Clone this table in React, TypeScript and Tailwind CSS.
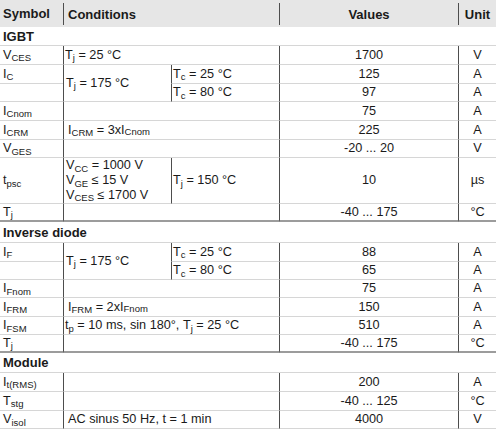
import React from "react";

const LINE = "border-[#4d4d4d]";
const HB = "border-b border-b-[#d6d6d6]";
const SEC = "border-b-2 border-b-[#9c9c9c]";

function S({ b, s }: { b: string; s: string }) {
  return (
    <span>
      {b}
      <sub>{s}</sub>
    </span>
  );
}

type RowProps = {
  h: string;
  sym?: React.ReactNode;
  cond?: React.ReactNode;
  condPad?: string;
  val?: React.ReactNode;
  unit?: React.ReactNode;
  last?: boolean;
};

function Row({ h, sym, cond, condPad = "pl-[1px]", val, unit, last }: RowProps) {
  const b = last ? SEC : HB;
  return (
    <div className={`flex ${h}`}>
      <div className={`w-[63px] shrink-0 flex items-center pl-[3px] ${b}`}>{sym}</div>
      <div className={`w-[216px] shrink-0 flex items-center border-l ${LINE} ${condPad} ${b}`}>{cond}</div>
      <div className={`w-[179px] shrink-0 flex items-center justify-center border-l ${LINE} ${b}`}>{val}</div>
      <div className={`w-[38px] shrink-0 flex items-center justify-center border-l ${LINE} ${b}`}>{unit}</div>
    </div>
  );
}

function Section({ h, title }: { h: string; title: string }) {
  return (
    <div className={`flex items-center pl-[3px] font-bold text-[13px] ${h} ${HB}`}>{title}</div>
  );
}

function SplitRow({
  sym,
  cond,
  a,
  b,
}: {
  sym: React.ReactNode;
  cond: React.ReactNode;
  a: { tc: React.ReactNode; val: string; unit: string };
  b: { tc: React.ReactNode; val: string; unit: string };
}) {
  return (
    <div className="flex">
      <div className="w-[63px] shrink-0 flex flex-col">
        <div className={`h-[19px] flex items-center pl-[3px] ${HB}`}>{sym}</div>
        <div className={`h-[18px] ${HB}`}></div>
      </div>
      <div className={`w-[108px] shrink-0 flex items-center pl-[2px] border-l ${LINE} ${HB}`}>{cond}</div>
      <div className="w-[325px] shrink-0 flex flex-col">
        {[a, b].map((r, i) => (
          <div key={i} className={`flex ${i === 0 ? "h-[19px]" : "h-[18px]"}`}>
            <div className={`w-[108px] shrink-0 flex items-center pl-[1px] border-l ${LINE} ${HB}`}>{r.tc}</div>
            <div className={`w-[179px] shrink-0 flex items-center justify-center border-l ${LINE} ${HB}`}>{r.val}</div>
            <div className={`w-[38px] shrink-0 flex items-center justify-center border-l ${LINE} ${HB}`}>{r.unit}</div>
          </div>
        ))}
      </div>
    </div>
  );
}

export default function App() {
  return (
    <div className="w-[496px] h-[431px] bg-white text-[#1a1a1a] text-[12.7px] leading-none font-['Liberation_Sans',Arial,sans-serif] overflow-hidden">
      {/* Header */}
      <div className="flex h-[27px] bg-[#e6e6e6] font-bold text-[13px]">
        <div className="w-[63px] shrink-0 flex items-center pl-[3px]">Symbol</div>
        <div className={`w-[216px] shrink-0 mt-[3px] mb-[2px] flex items-center pl-[4px] border-l ${LINE}`}>Conditions</div>
        <div className={`w-[179px] shrink-0 mt-[3px] mb-[2px] flex items-center justify-center border-l ${LINE}`}>Values</div>
        <div className={`w-[38px] shrink-0 mt-[3px] mb-[2px] flex items-center justify-center border-l ${LINE}`}>Unit</div>
      </div>

      <Section h="h-[19px]" title="IGBT" />
      <Row h="h-[19px]" sym={<S b="V" s="CES" />} cond={<>
        <S b="T" s="j" />&nbsp;= 25 °C</>} val="1700" unit="V" />
      <SplitRow
        sym={<S b="I" s="C" />}
        cond={<><S b="T" s="j" />&nbsp;= 175 °C</>}
        a={{ tc: <><S b="T" s="c" />&nbsp;= 25 °C</>, val: "125", unit: "A" }}
        b={{ tc: <><S b="T" s="c" />&nbsp;= 80 °C</>, val: "97", unit: "A" }}
      />
      <Row h="h-[19px]" sym={<S b="I" s="Cnom" />} val="75" unit="A" />
      <Row
        h="h-[19px]"
        sym={<S b="I" s="CRM" />}
        condPad="pl-[4px]"
        cond={<><S b="I" s="CRM" />&nbsp;= 3xI<sub>Cnom</sub></>}
        val="225"
        unit="A"
      />
      <Row h="h-[18px]" sym={<S b="V" s="GES" />} val="-20 ... 20" unit="V" />
      <div className="flex h-[46px]">
        <div className={`w-[63px] shrink-0 flex items-center pl-[3px] ${HB}`}>
          <S b="t" s="psc" />
        </div>
        <div className={`w-[108px] shrink-0 flex flex-col justify-center gap-[2px] pl-[2px] border-l ${LINE} ${HB}`}>
          <div><S b="V" s="CC" />&nbsp;= 1000 V</div>
          <div><S b="V" s="GE" />&nbsp;≤ 15 V</div>
          <div><S b="V" s="CES" />&nbsp;≤ 1700 V</div>
        </div>
        <div className={`w-[108px] shrink-0 flex items-center pl-[1px] border-l ${LINE} ${HB}`}>
          <S b="T" s="j" />&nbsp;= 150 °C
        </div>
        <div className={`w-[179px] shrink-0 flex items-center justify-center border-l ${LINE} ${HB}`}>10</div>
        <div className={`w-[38px] shrink-0 flex items-center justify-center border-l ${LINE} ${HB}`}>µs</div>
      </div>
      <Row h="h-[18px]" sym={<S b="T" s="j" />} val="-40 ... 175" unit="°C" last />

      <Section h="h-[21px]" title="Inverse diode" />
      <SplitRow
        sym={<S b="I" s="F" />}
        cond={<><S b="T" s="j" />&nbsp;= 175 °C</>}
        a={{ tc: <><S b="T" s="c" />&nbsp;= 25 °C</>, val: "88", unit: "A" }}
        b={{ tc: <><S b="T" s="c" />&nbsp;= 80 °C</>, val: "65", unit: "A" }}
      />
      <Row h="h-[18px]" sym={<S b="I" s="Fnom" />} val="75" unit="A" />
      <Row
        h="h-[19px]"
        sym={<S b="I" s="FRM" />}
        condPad="pl-[4px]"
        cond={<><S b="I" s="FRM" />&nbsp;= 2xI<sub>Fnom</sub></>}
        val="150"
        unit="A"
      />
      <Row
        h="h-[18px]"
        sym={<S b="I" s="FSM" />}
        cond={<><S b="t" s="p" />&nbsp;= 10 ms, sin 180°,&nbsp;<S b="T" s="j" />&nbsp;= 25 °C</>}
        val="510"
        unit="A"
      />
      <Row h="h-[18px]" sym={<S b="T" s="j" />} val="-40 ... 175" unit="°C" last />

      <Section h="h-[20px]" title="Module" />
      <Row h="h-[19px]" sym={<S b="I" s="t(RMS)" />} val="200" unit="A" />
      <Row h="h-[19px]" sym={<S b="T" s="stg" />} val="-40 ... 125" unit="°C" />
      <Row
        h="h-[18px]"
        sym={<S b="V" s="isol" />}
        condPad="pl-[4px]"
        cond="AC sinus 50 Hz, t = 1 min"
        val="4000"
        unit="V"
      />
    </div>
  );
}
